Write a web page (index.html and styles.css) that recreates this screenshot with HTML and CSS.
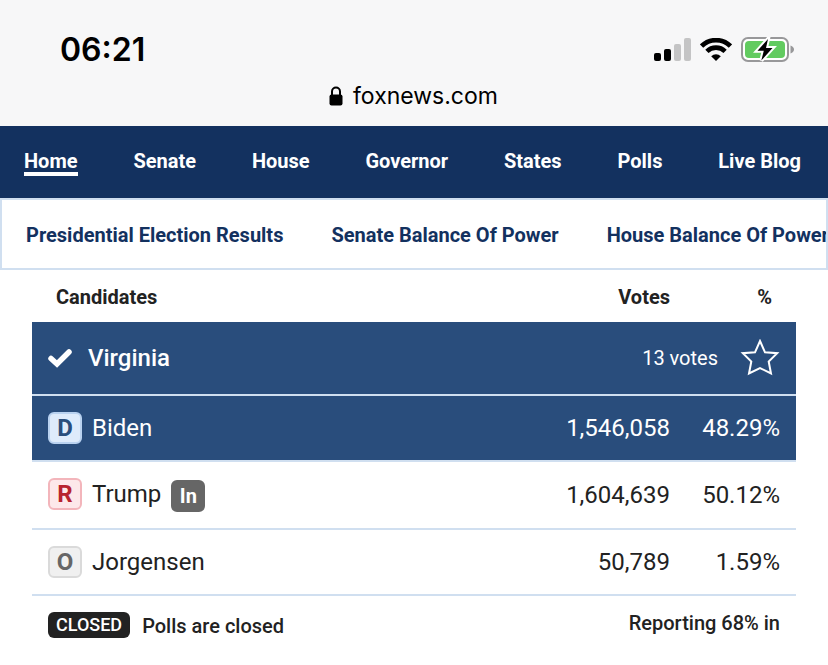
FILE: index.html
```html
<!DOCTYPE html>
<html lang="en">
<head>
<meta charset="utf-8">
<meta name="viewport" content="width=device-width, initial-scale=1">
<title>Election Results</title>
<link rel="stylesheet" href="styles.css">
</head>
<body>
<header class="browser">
  <div class="status">
    <time class="clock">06:21</time>
    <div class="indicators">
      <svg width="38" height="24" viewBox="0 0 38 24" aria-hidden="true">
        <rect x="1" y="15" width="7" height="8" rx="2" fill="#000"/>
        <rect x="11" y="11" width="7" height="12" rx="2" fill="#000"/>
        <rect x="21" y="6" width="7" height="17" rx="2" fill="#c4c4c5"/>
        <rect x="31" y="0" width="7" height="23" rx="2" fill="#c4c4c5"/>
      </svg>
      <svg width="32" height="24" viewBox="0 0 32 24" aria-hidden="true">
        <g fill="none" stroke="#000" stroke-width="4.6">
          <path d="M1.6 8 A20.5 20.5 0 0 1 30.4 8"/>
          <path d="M6.9 13.300 A13 13 0 0 1 25.1 13.300"/>
        </g>
        <path d="M16 23 L11.2 18.200 A6.9 6.9 0 0 1 20.8 18.200 Z" fill="#000"/>
      </svg>
      <svg width="54" height="26" viewBox="0 0 54 26" aria-hidden="true">
        <rect x="1" y="1" width="46" height="23" rx="6" fill="#fff" stroke="#98989a" stroke-width="2"/>
        <rect x="4" y="4" width="40" height="17" rx="4" fill="#62cb60"/>
        <path d="M49.500 8.500 Q53 10 53 12.500 Q53 15 49.500 16.500 Z" fill="#98989a"/>
        <path d="M27 2 L16.500 13.800 H22.800 L20.300 23.500 L31.500 11 H25 Z" fill="#000" stroke="#fff" stroke-width="4" paint-order="stroke"/>
      </svg>
    </div>
  </div>
  <div class="address">
    <svg width="14" height="20" viewBox="0 0 14 20" aria-hidden="true">
      <path d="M3 9 V5.500 A4 4 0 0 1 11 5.500 V9" fill="none" stroke="#000" stroke-width="2"/>
      <rect x="0.500" y="8.500" width="13" height="11" rx="2" fill="#000"/>
    </svg>
    <span>foxnews.com</span>
  </div>
</header>
<nav class="main-nav">
  <a class="current" href="#">Home</a>
  <a href="#">Senate</a>
  <a href="#">House</a>
  <a href="#">Governor</a>
  <a href="#">States</a>
  <a href="#">Polls</a>
  <a href="#">Live Blog</a>
</nav>
<nav class="sub-nav">
  <a href="#">Presidential Election Results</a>
  <a href="#">Senate Balance Of Power</a>
  <a href="#">House Balance Of Power</a>
</nav>
<main class="results">
  <table>
    <thead>
      <tr><th class="head-name">Candidates</th><th class="votes">Votes</th><th class="head-pct">%</th></tr>
    </thead>
    <tbody>
      <tr class="state winner">
        <td colspan="3">
          <div class="state-line">
            <svg width="24" height="20" viewBox="0 0 24 20" aria-hidden="true">
              <path d="M3 10.500 L9 16 L21 4" fill="none" stroke="#fff" stroke-width="5.500" stroke-linecap="round" stroke-linejoin="miter"/>
            </svg>
            <span class="state-name">Virginia</span>
            <span class="electoral">13 votes</span>
            <button class="star" type="button" aria-label="Follow Virginia">
              <svg width="40" height="38" viewBox="0 0 40 38" aria-hidden="true">
                <path d="M20 2 L25 13.300 L37.200 14.200 L28.700 22.500 L31 34.500 L20 29 L9 34.500 L11.300 22.500 L2.800 14.200 L15 13.300 Z" fill="none" stroke="#fff" stroke-width="2"/>
              </svg>
            </button>
          </div>
        </td>
      </tr>
      <tr class="candidate winner">
        <td><div class="person"><span class="party dem">D</span><span>Biden</span></div></td>
        <td class="votes">1,546,058</td><td class="pct">48.29%</td>
      </tr>
      <tr class="candidate">
        <td><div class="person"><span class="party rep">R</span><span>Trump</span><span class="incumbent">In</span></div></td>
        <td class="votes">1,604,639</td><td class="pct">50.12%</td>
      </tr>
      <tr class="candidate">
        <td><div class="person"><span class="party other">O</span><span>Jorgensen</span></div></td>
        <td class="votes">50,789</td><td class="pct">1.59%</td>
      </tr>
    </tbody>
  </table>
  <div class="summary">
    <div class="polls"><span class="closed">CLOSED</span><span>Polls are closed</span></div>
    <span class="reporting">Reporting 68% in</span>
  </div>
</main>
</body>
</html>
```
FILE: styles.css
```css
* { box-sizing: border-box; }
body {
  margin: 0;
  background: #fff;
  color: #222;
  font-family: Roboto, "Liberation Sans", sans-serif;
  font-size: 20px;
  line-height: 24px;
  overflow-x: hidden;
}
a { color: inherit; text-decoration: none; }
svg { display: block; flex: none; }

.browser {
  background: #f7f7f8;
  color: #000;
  padding: 32px 33px 14px 60px;
  font-family: Inter, "Liberation Sans", sans-serif;
}
.status { display: flex; justify-content: space-between; align-items: center; height: 36px; }
.clock { font-size: 32px; font-weight: 600; }
.indicators { display: flex; align-items: center; gap: 9px; }
.address {
  display: flex;
  align-items: center;
  justify-content: center;
  gap: 10px;
  height: 32px;
  margin-top: 12px;
  margin-left: -28px;
  font-size: 23px;
}

.main-nav {
  display: flex;
  justify-content: space-between;
  align-items: center;
  height: 72px;
  padding: 0 27px 0 24px;
  background: #13315f;
  color: #fff;
  font-weight: 700;
  line-height: 22px;
  white-space: nowrap;
}
.main-nav a { padding-top: 2px; border-bottom: 4px solid transparent; }
.main-nav .current { border-color: #fff; }

.sub-nav {
  display: flex;
  align-items: center;
  gap: 48px;
  height: 72px;
  padding: 2px 24px 0;
  border: 2px solid #d0dff0;
  color: #13315f;
  font-weight: 700;
  white-space: nowrap;
  overflow: hidden;
}

.results { padding: 0 32px; }
table { width: 100%; border-spacing: 0; }
th, td { padding: 0; }
th { height: 52px; padding-top: 2px; font-weight: 700; text-align: right; }
.head-name { padding-left: 24px; text-align: left; }
.head-pct { width: 126px; padding-right: 24px; }
.votes, .pct { text-align: right; }
td { border-bottom: 2px solid #d0dff0; }
.winner { background: #294d7c; color: #fff; }
.state td { height: 74px; padding: 0 16px; }
.state-line { display: flex; align-items: center; }
.state-name { margin-left: 16px; margin-right: auto; font-size: 24px; font-weight: 500; }
.electoral { margin-right: 22px; }
.star { padding: 0; border: 0; background: none; color: inherit; }
.candidate { font-size: 24px; }
.candidate .pct { padding-right: 16px; }
.person {
  display: flex;
  align-items: flex-start;
  gap: 10px;
  padding: 16px 0 16px 16px;
  line-height: 32px;
}
.party, .incumbent {
  display: flex;
  align-items: center;
  justify-content: center;
  width: 34px;
  height: 32px;
  border: 2px solid;
  border-radius: 6px;
  font-weight: 700;
}
.dem { background: #deebfb; border-color: #b9d2f0; color: #294d7c; }
.rep { background: #fde8ea; border-color: #f3b5bb; color: #b8232f; }
.other { background: #f0f0f0; border-color: #dadada; color: #666; }
.incumbent { margin-top: 2px; background: #666; border-color: #666; color: #fff; font-size: 20px; }

.summary { display: flex; justify-content: space-between; padding: 16px; font-weight: 500; }
.polls { display: flex; align-items: flex-start; gap: 12px; line-height: 28px; }
.closed {
  padding: 1px 8px;
  border-radius: 6px;
  background: #222;
  color: #fff;
  font-size: 18px;
  line-height: 24px;
}
.reporting { line-height: 22px; }
```
